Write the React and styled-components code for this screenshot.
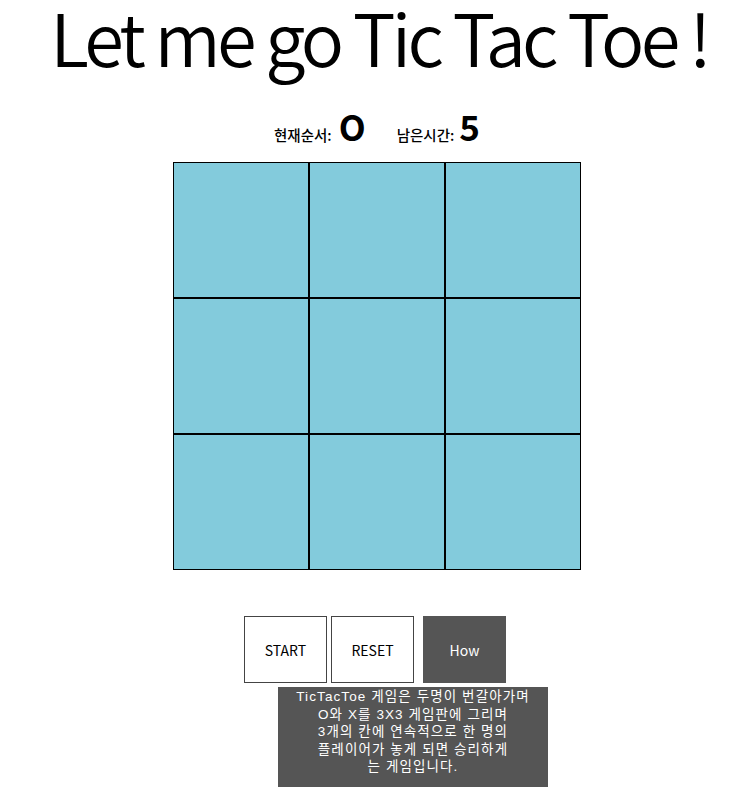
import styled, { createGlobalStyle } from 'styled-components'

const GlobalStyle = createGlobalStyle`
  body {
    margin: 0;
    background: #fff;
    font-family: "Noto Sans CJK KR", "Noto Sans", sans-serif;
    color: #000;
  }
`

const Page = styled.div`
  width: 739px;
  min-height: 808px;
  padding-left: 15px;
  box-sizing: border-box;
  display: flex;
  flex-direction: column;
  align-items: center;
`

const Title = styled.h1`
  margin: 0 0 0 4px;
  font-size: 72px;
  line-height: 1;
  font-weight: 350;
  letter-spacing: -3.7px;
  white-space: nowrap;
`

const Status = styled.div`
  display: flex;
  align-items: baseline;
  gap: 31px;
  margin-top: 36px;
  height: 34px;
`

const StatusItem = styled.div`
  display: flex;
  align-items: baseline;
  gap: ${(p) => p.gap}px;
`

const Label = styled.span`
  font-size: 14.5px;
  font-weight: 500;
`

const Value = styled.span`
  font-size: 35px;
  font-weight: 700;
  line-height: 1;
`

const Board = styled.div`
  display: grid;
  grid-template-columns: repeat(3, 136px);
  grid-template-rows: repeat(3, 136px);
  margin-top: 20px;
`

const Cell = styled.div`
  box-sizing: border-box;
  border: 1px solid #000;
  background: #83cbdc;
`

const Controls = styled.div`
  display: flex;
  margin-top: 46px;
  margin-right: 4px;
`

const Button = styled.button`
  box-sizing: border-box;
  width: 83px;
  height: 67px;
  margin-left: ${(p) => p.gap || 0}px;
  border: 1px solid ${(p) => (p.dark ? '#555' : '#444')};
  background: ${(p) => (p.dark ? '#555' : '#fff')};
  color: ${(p) => (p.dark ? '#fff' : '#000')};
  font-family: inherit;
  font-size: 14px;
  padding: 0;
`

const HowWrap = styled.div`
  position: relative;
  margin-left: 9px;
`

const Tooltip = styled.div`
  position: absolute;
  z-index: 2;
  top: 71px;
  left: -145px;
  width: 270px;
  box-sizing: border-box;
  padding: 1px 2px 11px;
  background: #555;
  color: #fff;
  font-family: "Liberation Sans", "Noto Sans CJK KR", sans-serif;
  font-size: 13.5px;
  letter-spacing: 1.1px;
  line-height: 17.5px;
  text-align: center;
`

const cells = Array.from({ length: 9 })

export default function App() {
  return (
    <>
      <GlobalStyle />
      <Page>
        <Title>Let me go Tic Tac Toe !</Title>
        <Status>
          <StatusItem gap={7}>
            <Label>현재순서:</Label>
            <Value>O</Value>
          </StatusItem>
          <StatusItem gap={5}>
            <Label>남은시간:</Label>
            <Value>5</Value>
          </StatusItem>
        </Status>
        <Board>
          {cells.map((_, i) => (
            <Cell key={i} />
          ))}
        </Board>
        <Controls>
          <Button>START</Button>
          <Button gap={4}>RESET</Button>
          <HowWrap>
            <Button dark>How</Button>
            <Tooltip>
              TicTacToe 게임은 두명이 번갈아가며
              <br />
              O와 X를 3X3 게임판에 그리며
              <br />
              3개의 칸에 연속적으로 한 명의
              <br />
              플레이어가 놓게 되면 승리하게
              <br />는 게임입니다.
            </Tooltip>
          </HowWrap>
        </Controls>
      </Page>
    </>
  )
}
